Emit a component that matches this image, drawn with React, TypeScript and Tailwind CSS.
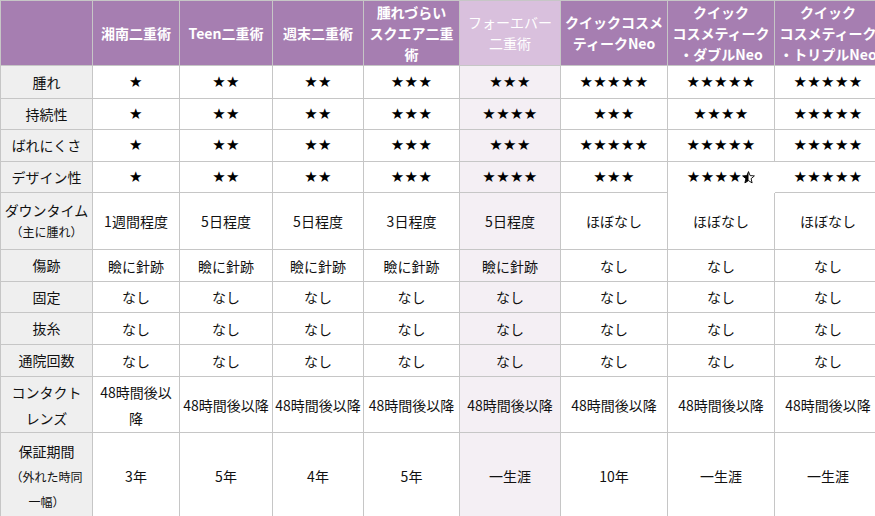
import React from "react";

const heads: string[][] = [
  ["湘南二重術"],
  ["Teen二重術"],
  ["週末二重術"],
  ["腫れづらい", "スクエア二重", "術"],
  ["フォーエバー", "二重術"],
  ["クイックコスメ", "ティークNeo"],
  ["クイック", "コスメティーク", "・ダブルNeo"],
  ["クイック", "コスメティーク", "・トリプルNeo"],
];

type Cell = number | string;

const rows: { label: React.ReactNode; h: string; cells: Cell[] }[] = [
  { label: "腫れ", h: "h-[33px]", cells: [1, 2, 2, 3, 3, 5, 5, 5] },
  { label: "持続性", h: "h-[31px]", cells: [1, 2, 2, 3, 4, 3, 4, 5] },
  { label: "ばれにくさ", h: "h-[32px]", cells: [1, 2, 2, 3, 3, 5, 5, 5] },
  { label: "デザイン性", h: "h-[31px]", cells: [1, 2, 2, 3, 4, 3, 4.5, 5] },
  {
    label: (
      <div className="flex flex-col items-center">
        <span className="leading-[22px]">ダウンタイム</span>
        <span className="text-[12px] leading-[22px]">（主に腫れ）</span>
      </div>
    ),
    h: "h-[57px]",
    cells: ["1週間程度", "5日程度", "5日程度", "3日程度", "5日程度", "ほぼなし", "ほぼなし", "ほぼなし"],
  },
  { label: "傷跡", h: "h-[32px]", cells: ["瞼に針跡", "瞼に針跡", "瞼に針跡", "瞼に針跡", "瞼に針跡", "なし", "なし", "なし"] },
  { label: "固定", h: "h-[31px]", cells: Array(8).fill("なし") },
  { label: "抜糸", h: "h-[32px]", cells: Array(8).fill("なし") },
  { label: "通院回数", h: "h-[32px]", cells: Array(8).fill("なし") },
  {
    label: (
      <div className="flex flex-col items-center leading-[26px]">
        <span>コンタクト</span>
        <span>レンズ</span>
      </div>
    ),
    h: "h-[56px]",
    cells: ["48時間後以\n降", "48時間後以降", "48時間後以降", "48時間後以降", "48時間後以降", "48時間後以降", "48時間後以降", "48時間後以降"],
  },
  {
    label: (
      <div className="flex flex-col items-center leading-[25px]">
        <span>保証期間</span>
        <span className="text-[12px]">（外れた時同</span>
        <span className="text-[12px]">一幅）</span>
      </div>
    ),
    h: "h-[87px]",
    cells: ["3年", "5年", "4年", "5年", "一生涯", "10年", "一生涯", "一生涯"],
  },
];

const widths = ["w-[87px]", "w-[93px]", "w-[91px]", "w-[96px]", "w-[101px]", "w-[107px]", "w-[107px]", "w-[107px]"];

const STAR = "M6.5 0.6 L8.1 4.6 L12.4 4.9 L9.1 7.7 L10.1 11.9 L6.5 9.6 L2.9 11.9 L3.9 7.7 L0.6 4.9 L4.9 4.6 Z";

function HalfStar() {
  return (
    <svg width="13" height="13" viewBox="0 0 13 13" className="inline-block">
      <defs>
        <clipPath id="halfclip">
          <rect x="0" y="0" width="6.5" height="13" />
        </clipPath>
      </defs>
      <path d={STAR} fill="none" stroke="#000" strokeWidth="0.9" strokeLinejoin="round" />
      <path d={STAR} fill="#000" clipPath="url(#halfclip)" />
    </svg>
  );
}

function Stars({ n }: { n: number }) {
  const full = Math.floor(n);
  const half = n - full > 0;
  return (
    <span
      className="inline-flex items-center text-[15px] leading-none tracking-[0.4px] text-black"
      style={{ fontFamily: '"DejaVu Sans", sans-serif' }}
    >
      {"★".repeat(full)}
      {half && <HalfStar />}
    </span>
  );
}

export default function App() {
  return (
    <div
      className="w-[875px] h-[516px] overflow-hidden bg-white text-[14px] text-[#111]"
      style={{ fontFamily: '"Noto Sans CJK JP", "Noto Sans", sans-serif' }}
    >
      <div className="flex flex-col w-[883px] border-l border-t border-[#c6c6c6]">
        <div className="flex h-[65px]">
          <div className="w-[92px] shrink-0 bg-[#a67eb1] border-r border-b border-[#c6c6c6]" />
          {heads.map((h, i) => (
            <div
              key={i}
              className={`${widths[i]} shrink-0 flex flex-col items-center justify-center border-r border-b border-[#c6c6c6] leading-[21px] whitespace-nowrap ${
                i === 4 ? "bg-[#d9c0dd] text-white font-normal" : "bg-[#a67eb1] text-white font-bold"
              }`}
            >
              {h.map((l, j) => (
                <span key={j}>{l}</span>
              ))}
            </div>
          ))}
        </div>
        {rows.map((r, ri) => (
          <div key={ri} className={`flex ${r.h}`}>
            <div className="w-[92px] shrink-0 flex items-center justify-center bg-[#efefef] border-r border-b border-[#c6c6c6] whitespace-nowrap">
              {r.label}
            </div>
            {r.cells.map((c, ci) => {
              const special = ri === 3 && ci === 6;
              return (
                <div
                  key={ci}
                  className={`${widths[ci]} shrink-0 flex flex-col items-center justify-center text-center leading-[26px] ${
                    special ? "border-r border-r-transparent" : "border-r border-b border-[#c6c6c6]"
                  } ${ci === 4 ? "bg-[#f4eff4]" : "bg-white"}`}
                >
                  {typeof c === "number" ? (
                    <Stars n={c} />
                  ) : (
                    c.split("\n").map((l, k) => (
                      <span key={k} className="whitespace-nowrap">
                        {l}
                      </span>
                    ))
                  )}
                </div>
              );
            })}
          </div>
        ))}
      </div>
    </div>
  );
}
